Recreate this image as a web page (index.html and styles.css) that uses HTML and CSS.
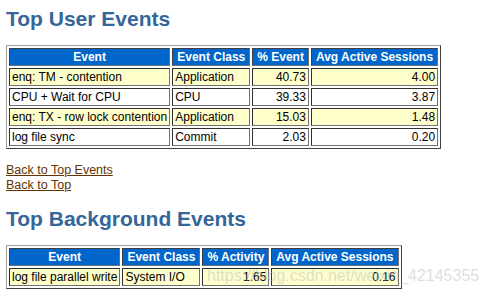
FILE: index.html
```html
<!DOCTYPE html>
<html>
<head>
<meta charset="utf-8">
<link rel="stylesheet" href="styles.css">
</head>
<body class="awr">
<h3 class="awr">Top User Events</h3>
<table class="tdiff">
  <tr><th class="awrbg">Event</th><th class="awrbg">Event Class</th><th class="awrbg">% Event</th><th class="awrbg">Avg Active Sessions</th></tr>
  <tr><td class="awrc">enq: TM - contention</td><td class="awrc">Application</td><td class="awrc num">40.73</td><td class="awrc num">4.00</td></tr>
  <tr><td class="awrnc">CPU + Wait for CPU</td><td class="awrnc">CPU</td><td class="awrnc num">39.33</td><td class="awrnc num">3.87</td></tr>
  <tr><td class="awrc">enq: TX - row lock contention</td><td class="awrc">Application</td><td class="awrc num">15.03</td><td class="awrc num">1.48</td></tr>
  <tr><td class="awrnc">log file sync</td><td class="awrnc">Commit</td><td class="awrnc num">2.03</td><td class="awrnc num">0.20</td></tr>
</table>
<div class="links">
  <a class="awr" href="#">Back to Top Events</a><br>
  <a class="awr" href="#">Back to Top</a>
</div>
<h3 class="awr">Top Background Events</h3>
<table class="tdiff">
  <tr><th class="awrbg">Event</th><th class="awrbg">Event Class</th><th class="awrbg">% Activity</th><th class="awrbg">Avg Active Sessions</th></tr>
  <tr><td class="awrc">log file parallel write</td><td class="awrc">System I/O</td><td class="awrc num">1.65</td><td class="awrc num">0.16</td></tr>
</table>
<div class="watermark">https://blog.csdn.net/weixin_42145355</div>
</body>
</html>
```
FILE: styles.css
```css
body.awr {
  margin: 0;
  padding: 7px 6px 0;
  font-family: "Liberation Sans", Arial, sans-serif;
  color: #000;
  background: #fff;
  position: relative;
}
h3.awr {
  font: bold 21px/24px "Liberation Sans", Arial, sans-serif;
  color: #336699;
  margin: 0 0 14px;
}
table.tdiff {
  border: 1px solid;
  border-color: #a0a0a0 #404040 #404040 #a0a0a0;
  border-spacing: 2px;
  margin-bottom: 14px;
}
th.awrbg {
  font: bold 12px/14px "Liberation Sans", Arial, sans-serif;
  color: #fff;
  background: #0066cc;
  padding: 1px 4px;
  border: 1px solid;
  border-color: #404040 #707070 #707070 #404040;
  text-align: center;
}
td.awrc, td.awrnc {
  font: 12px/14px "Liberation Sans", Arial, sans-serif;
  color: #000;
  padding: 1px 2px;
  border: 1px solid;
  border-color: #303030 #707070 #707070 #303030;
  vertical-align: top;
  text-align: left;
}
td.awrc { background: #ffffcc; }
td.awrnc { background: #fff; }
td.num { text-align: right; }
.links {
  margin-bottom: 14px;
  font: 12.5px/15px "Liberation Sans", Arial, sans-serif;
}
a.awr {
  color: #663300;
  text-decoration: underline;
}
.watermark {
  position: absolute;
  left: 207px;
  top: 267px;
  font: 16px/18px "Liberation Sans", Arial, sans-serif;
  color: rgba(190, 190, 190, 0.5);
  white-space: nowrap;
}
```
